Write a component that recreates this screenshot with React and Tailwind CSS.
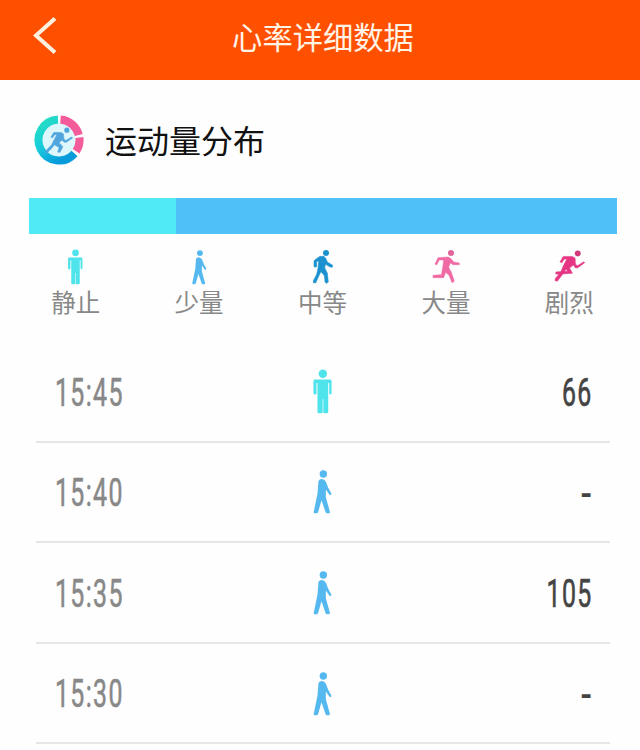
const CJK = "font-['Noto_Sans_CJK_SC',sans-serif]";

function Standing({ className }) {
  return (
    <svg viewBox="66 26 62 134" className={className} fill="#4fe3ec">
      <circle cx="98" cy="40" r="12.5" />
      <path d="M74 57H119Q124 57 124 62V98Q124 102 120.500 102Q117 102 117 98V68H114V154Q114 158 110 158H103Q99.500 158 99.500 154V116H97.500V154Q97.500 158 93 158H86Q82 158 82 154V68H79V98Q79 102 75 102Q70 102 70 98V62Q70 57 74 57Z" />
    </svg>
  );
}

function Strolling({ className }) {
  return (
    <svg viewBox="66 326 62 134" className={className} fill="#55b9ef">
      <circle cx="99.500" cy="341" r="11" />
      <path d="M85 362Q88 356 95 356Q103 357 107 364L114 382L123 398Q125 404 119 404L109 390L107 387L107 410L119 453Q120 458 115 458H109Q107 457 106 454L94 419L84 454Q83 458 79 458H73Q70 457 71 453L82 400Z" />
    </svg>
  );
}

function Walking() {
  return (
    <svg viewBox="64 27 66 105" className="h-[35px] w-[22px]" fill="#1b92cf">
      <circle cx="106" cy="39" r="9" />
      <path d="M76 57L88 49H100L106 56L110 66L126 76L125 82L118 81L105 73L102 83L110 99L113 126L108 130L103 127L101 107L91 95L86 105L75 129L68 128V122L78 103L82 84L84 62L78 65V80L72 82L70 78V62Z" stroke="#1b92cf" strokeWidth="1.500" strokeLinejoin="round" />
    </svg>
  );
}

function Jogging() {
  return (
    <svg viewBox="421 27 90 105" className="h-[35px] w-[30px]" fill="#f06ba4">
      <circle cx="481" cy="39" r="9" fill="#e0659a" />
      <path d="M442 53L472 51L480 55L489 66L506 69V74L487 74L479 69L474 82L482 97L491 124L484 128L475 106L465 97L459 113H427V106L452 104L456 84L459 60L446 60L438 75L433 72Z" stroke="#f06ba4" strokeWidth="1.500" strokeLinejoin="round" />
    </svg>
  );
}

function Sprinting() {
  return (
    <svg viewBox="790 27 100 105" className="h-[35px] w-[33px]" fill="#e63583">
      <circle cx="865" cy="40" r="9" fill="#d03a7b" />
      <path fillRule="evenodd" d="M821 49H848L857 54L858 73L864 77L884 65L886 68L864 84L857 83L852 75L840 84L849 100L820 102L803 124L796 122L797 116L808 103L798 102L799 96L814 95L822 76L832 57H824L817 68L811 66ZM830 87L834 94L825 95Z" stroke="#e63583" strokeWidth="1.500" strokeLinejoin="round" />
    </svg>
  );
}

function RingLogo() {
  return (
    <svg viewBox="0 0 50 50" className="mt-0.5 size-[50px] shrink-0" fill="none">
      <defs>
        <linearGradient id="ring" x1="0" y1="0" x2="0.6" y2="1">
          <stop offset="0" stopColor="#27dfc0" />
          <stop offset="0.5" stopColor="#18cdda" />
          <stop offset="1" stopColor="#079bdc" />
        </linearGradient>
      </defs>
      <circle cx="25" cy="25" r="17" fill="#ddf7fc" />
      <path d="M24 4.540A20.500 20.500 0 1 0 40.500 38.500" stroke="url(#ring)" strokeWidth="8" />
      <path d="M26.500 4.550A20.500 20.500 0 0 1 44.800 20" stroke="#f45b9b" strokeWidth="8" />
      <path d="M45.400 22.500A20.500 20.500 0 0 1 42.100 36.300" stroke="#f45b9b" strokeWidth="8" />
      <g transform="translate(12.300 12) scale(0.285) translate(-795 -30)" fill="#4fa5dc">
        <circle cx="867" cy="41" r="9" />
        <path d="M821 49H846L855 54L857 73L864 77L884 65L887 69L864 84L857 83L850 76L840 85L853 99L843 119L835 118L840 102L824 92L812 107L796 122L789 118L814 92L822 76L832 57H824L817 68L811 66Z" stroke="#4fa5dc" strokeWidth="2" strokeLinejoin="round" />
      </g>
    </svg>
  );
}

const LEGEND = [
  { label: "静止", icon: <Standing className="h-[36px] w-[16.500px]" /> },
  { label: "少量", icon: <Strolling className="h-[36px] w-[16.500px]" /> },
  { label: "中等", icon: <Walking /> },
  { label: "大量", icon: <Jogging /> },
  { label: "剧烈", icon: <Sprinting /> },
];

const ROWS = [
  { time: "15:45", value: "66", still: true },
  { time: "15:40", value: "-" },
  { time: "15:35", value: "105" },
  { time: "15:30", value: "-" },
];

export default function App() {
  return (
    <div className={`h-[750px] w-[640px] overflow-hidden bg-[#fefefe] ${CJK}`}>
      <header className="grid h-20 grid-cols-[1fr_auto_1fr] items-center bg-[#ff5000]">
        <svg viewBox="0 0 24 38" className="mb-[11px] ml-[33px] h-[38px] w-6" fill="none" stroke="#fff1df" strokeWidth="4">
          <path d="M22 2.500L3 19.500L22 36.500" />
        </svg>
        <h1 className="pb-2 pl-1.5 text-[30.300px] leading-10 text-[#fff3e6]">心率详细数据</h1>
      </header>

      <div className="flex h-[118px] items-center gap-[21px] pl-[34px]">
        <RingLogo />
        <h2 className="text-[32px] leading-10 text-[#111]">运动量分布</h2>
      </div>

      <div className="ml-[29px] flex h-9 w-[588px]">
        <div className="w-[147px] bg-[#50eaf7]" />
        <div className="flex-1 bg-[#4fc0f8]" />
      </div>

      <div className="ml-[14px] flex h-[108px] w-[617px] pt-[15px]">
        {LEGEND.map(({ label, icon }) => (
          <div key={label} className="flex flex-1 flex-col items-center">
            <div className="flex h-9 items-start">{icon}</div>
            <span className="text-[24.500px] leading-[34px] text-[#888]">{label}</span>
          </div>
        ))}
      </div>

      <div className="ml-9 w-[574px]">
        {ROWS.map(({ time, value, still }) => (
          <div key={time} className="grid h-[100.600px] grid-cols-[1fr_auto_1fr] items-center border-b-2 border-[#e6e6e6] font-['Roboto',sans-serif] text-[39.500px] leading-none">
            <span className="origin-left scale-x-[0.63] pt-[2px] pl-[30px] tracking-[2.200px] text-[#888] [-webkit-text-stroke:0.600px_#888]">{time}</span>
            <div className="pr-[1.500px]">
              {still ? <Standing className="h-[45px] w-[21px]" /> : <Strolling className="h-[45px] w-[21px]" />}
            </div>
            {value === "-" ? (
              <span className="origin-right scale-x-[0.85] pt-[3px] pr-[21px] text-right font-medium text-[#444]">-</span>
            ) : (
              <span className="origin-right scale-x-[0.63] pt-[2px] pr-[27px] text-right tracking-[2.200px] text-[#444] [-webkit-text-stroke:0.700px_#444]">{value}</span>
            )}
          </div>
        ))}
      </div>
    </div>
  );
}
